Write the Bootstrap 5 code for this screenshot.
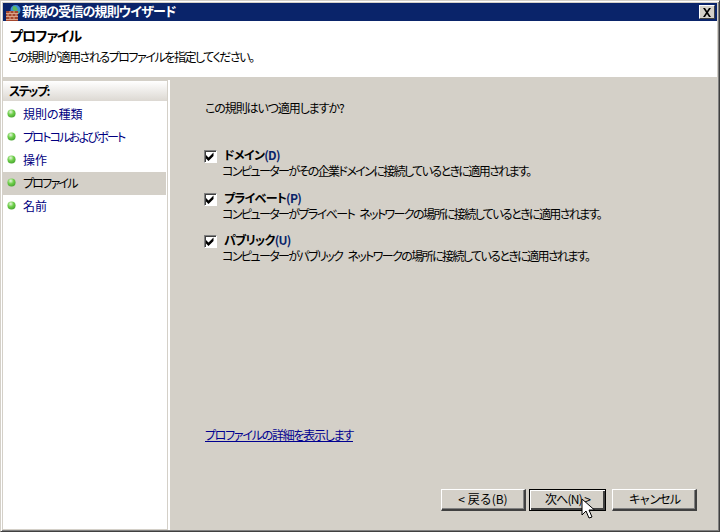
<!DOCTYPE html>
<html lang="ja">
<head>
<meta charset="utf-8">
<title>新規の受信の規則ウイザード</title>
<link href="https://cdn.jsdelivr.net/npm/bootstrap@5.3.0/dist/css/bootstrap.min.css" rel="stylesheet">
<style>
html,body{margin:0;width:720px;height:532px;overflow:hidden;background:#d4d0c8;}
body{font-family:"Noto Sans CJK JP","Liberation Sans",sans-serif;font-size:12px;line-height:16px;color:#000;font-feature-settings:"palt";}
.wz-window{width:720px;height:532px;padding:2px 2px 1px 2px;background:#d4d0c8;border:1px solid #d4d0c8;border-right-color:#404040;border-bottom-color:#404040;box-shadow:inset 1px 1px 0 #fff,inset -1px -1px 0 #808080;position:relative;}
.wz-title{height:18px;background:#0a246a;color:#fff;font-weight:700;font-size:13px;padding:0 2px;}
.wz-name{line-height:18px;margin-bottom:2px;letter-spacing:-.85px;}
.wz-close{width:16px;height:14px;background:#d4d0c8;border-style:solid;border-width:1px;border-color:#fff #404040 #404040 #fff;padding:0;}
.wz-head{height:56px;background:#fff;padding:6px 5px 0 5px;}
.wz-h1{font-size:14px;font-weight:700;line-height:17px;margin:0 0 0 2px;letter-spacing:-1px;}
.wz-sub{margin:5px 0 0 0;letter-spacing:-1.45px;}
.wz-body{height:450px;margin-top:3px;}
.wz-side{width:167px;background:#fff;flex:none;padding-right:2px;}
.wz-side-in{height:100%;border:solid #d4d0c8;border-width:1px 1px 1px 0;}
.wz-steps-h{height:20px;background:linear-gradient(#fff,#dcd8d2);font-weight:700;line-height:19px;padding-left:6px;margin-bottom:2px;letter-spacing:-1.5px;}
.wz-step{height:23px;padding:0 0 2px 4px;margin-right:1px;line-height:20px;color:#000080;gap:7px;}
.wz-step.is-on{background:#d4d0c8;color:#000;}
.wz-kana{letter-spacing:-1.75px;}
.wz-main{flex:1;padding:20px 0 0 35px;}
.wz-q{margin:0 0 31px 0;letter-spacing:-1.1px;}
.wz-opt{margin-bottom:10.5px;height:32px;gap:7px;margin-left:-1px;}
.wz-opt .form-check-input{width:13px;height:13px;margin:3px 0 0 0;flex:none;border-radius:0;border:1px solid;border-color:#808080 #fff #fff #808080;box-shadow:inset 1px 1px 0 #404040;background-color:#fff;background-size:13px 13px;background-image:url("data:image/svg+xml,%3csvg xmlns='http://www.w3.org/2000/svg' viewBox='0 0 13 13'%3e%3cpath d='M2 5l2.500 2.500L9.500 2.500v3.500L4.500 11 2 8.500z' fill='%23000'/%3e%3c/svg%3e");}
.wz-opt b{font-weight:700;display:block;color:#000;letter-spacing:-.7px;}
.wz-opt b span{color:#0a246a;}
.wz-opt .wz-desc{display:block;margin-left:-2px;letter-spacing:-1.6px;word-spacing:4px;}
.wz-link{color:#000090;text-decoration:underline;margin-top:152px;letter-spacing:-1.27px;align-self:flex-start;}
.wz-foot{margin:auto 20px 19px 0;align-self:flex-end;}
.wz-btn{width:85px;height:22px;padding:0 0 2px 0;font-size:12px;line-height:16px;color:#000;background:#d4d0c8;border-radius:0;border-style:solid;border-width:1px 2px 2px 1px;border-color:#fff #404040 #404040 #fff;box-shadow:inset -1px -1px 0 #808080;}
.wz-btn.wz-default{border:1px solid #000;box-shadow:inset 1px 1px 0 #fff,inset -2px -2px 0 #404040;width:77px;margin:0 6px 0 3px;letter-spacing:-.7px;}
.wz-tight{letter-spacing:-1.9px;}
.wz-cursor{position:absolute;left:580px;top:497px;}
</style>
</head>
<body>
<div class="wz-window d-flex flex-column">
  <div class="wz-title d-flex align-items-center flex-shrink-0">
    <svg width="17" height="17" viewBox="0 0 17 17"><circle cx="10.500" cy="6" r="5" fill="#3f8fd8"/><path d="M8 2l3 .5 2 3-3 2-2.500-2zM12.500 8l2.500-1-1 2.500z" fill="#5cb85c"/><rect x="1" y="7" width="12" height="10" fill="#a5482e"/><path d="M1 9.500h12M1 12.500h12M1 15.500h12M5 7v2.500M9 7v2.500M3 9.500v3M7 9.500v3M11 9.500v3M5 12.500v3M9 12.500v3" stroke="#d9a58c" stroke-width="1"/></svg>
    <span class="wz-name flex-grow-1">新規の受信の規則ウイザード</span>
    <button class="wz-close d-flex align-items-center justify-content-center" aria-label="閉じる"><svg width="10" height="9" viewBox="0 0 10 9"><path d="M1 0h2l2 3 2-3h2L6 4.500 9 9H7L5 6 3 9H1l3-4.500z" fill="#000"/></svg></button>
  </div>
  <div class="wz-head flex-shrink-0">
    <h1 class="wz-h1">プロファイル</h1>
    <p class="wz-sub">この規則が適用されるプロファイルを指定してください。</p>
  </div>
  <div class="wz-body d-flex flex-grow-1">
    <div class="wz-side">
      <div class="wz-side-in">
      <div class="wz-steps-h">ステップ:</div>
      <div class="wz-step d-flex align-items-center"><svg width="9" height="9" viewBox="0 0 10 10"><use href="#dot"/></svg>規則の種類</div>
      <div class="wz-step d-flex align-items-center"><svg width="9" height="9" viewBox="0 0 10 10"><use href="#dot"/></svg><span class="wz-kana">プロトコルおよびポート</span></div>
      <div class="wz-step d-flex align-items-center"><svg width="9" height="9" viewBox="0 0 10 10"><use href="#dot"/></svg>操作</div>
      <div class="wz-step is-on d-flex align-items-center"><svg width="9" height="9" viewBox="0 0 10 10"><use href="#dot"/></svg><span class="wz-kana">プロファイル</span></div>
      <div class="wz-step d-flex align-items-center"><svg width="9" height="9" viewBox="0 0 10 10"><use href="#dot"/></svg>名前</div>
      </div>
    </div>
    <div class="wz-main d-flex flex-column">
      <p class="wz-q">この規則はいつ適用しますか?</p>
      <label class="wz-opt d-flex"><input class="form-check-input" type="checkbox" checked><span><b>ドメイン<span>(D)</span></b><span class="wz-desc">コンピューターがその企業ドメインに接続しているときに適用されます。</span></span></label>
      <label class="wz-opt d-flex"><input class="form-check-input" type="checkbox" checked><span><b>プライベート<span>(P)</span></b><span class="wz-desc">コンピューターがプライベート ネットワークの場所に接続しているときに適用されます。</span></span></label>
      <label class="wz-opt d-flex"><input class="form-check-input" type="checkbox" checked><span><b>パブリック<span>(U)</span></b><span class="wz-desc">コンピューターがパブリック ネットワークの場所に接続しているときに適用されます。</span></span></label>
      <a class="wz-link" href="#">プロファイルの詳細を表示します</a>
      <div class="wz-foot d-flex">
        <button class="btn wz-btn">&lt; 戻る(B)</button>
        <button class="btn wz-btn wz-default">次へ(N) &gt;</button>
        <button class="btn wz-btn wz-tight">キャンセル</button>
      </div>
    </div>
  </div>
  <svg class="wz-cursor" width="16" height="22" viewBox="0 0 16 22"><path d="M1 1v16l4-4 3 7 3-1-3-7h5.500z" fill="#fff" stroke="#000" stroke-width="1"/></svg>
</div>
<svg width="0" height="0" class="position-absolute"><defs><radialGradient id="dotg" cx=".4" cy=".3" r=".8"><stop offset="0" stop-color="#e8f5e0"/><stop offset=".45" stop-color="#6fd04a"/><stop offset="1" stop-color="#3f9a2c"/></radialGradient><symbol id="dot" viewBox="0 0 10 10"><circle cx="5" cy="5" r="4.500" fill="url(#dotg)"/></symbol></defs></svg>
<script src="https://cdn.jsdelivr.net/npm/bootstrap@5.3.0/dist/js/bootstrap.bundle.min.js"></script>
</body>
</html>
